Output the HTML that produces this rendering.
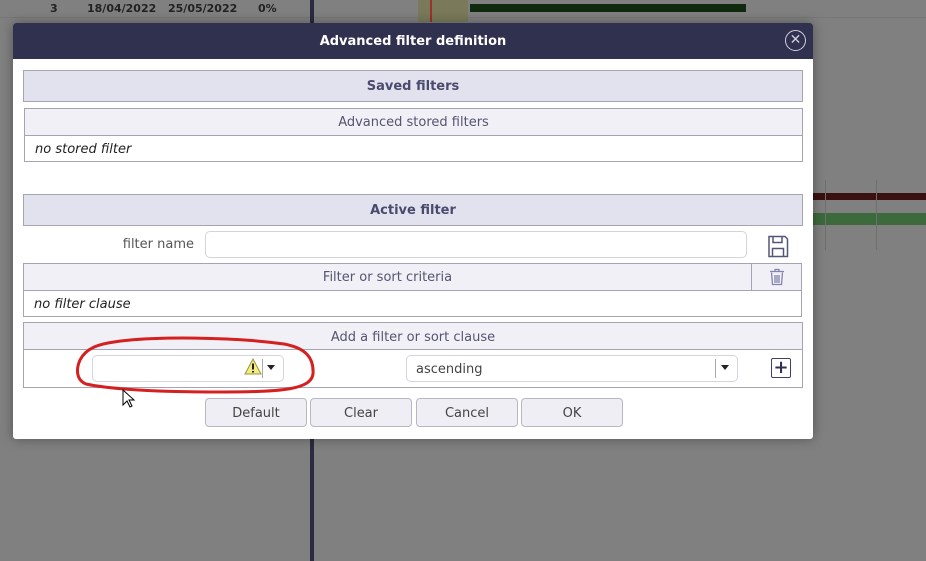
<!DOCTYPE html>
<html><head><style>
body{margin:0;width:926px;height:561px;background:#808080;position:relative;overflow:hidden;font-family:"DejaVu Sans","Liberation Sans",sans-serif;}
.a{position:absolute;box-sizing:border-box}
.hd{background:#e2e2ee;border:1px solid #a4a4b4;color:#4a4a6e;font-weight:bold;font-size:13px;text-align:center}
.sh{background:#f0f0f6;border:1px solid #a4a4b4;color:#555570;font-size:13px;text-align:center}
.rw{background:#fff;border:1px solid #a4a4b4;font-size:13px;font-style:italic;color:#222;padding-left:10px}
.btn{background:#eeeef4;border:1px solid #b8b8c4;border-radius:4px;font-size:13px;color:#444;text-align:center;line-height:29px}
.in{background:#fff;border:1px solid #d4d4dc;border-radius:5px}
</style></head><body>
<div class="a" style="left:0;top:0;width:926px;height:18px;border-bottom:1px solid #777"></div>
<div class="a" style="left:418px;top:0;width:50px;height:22px;background:#7a7a5a"></div>
<div class="a" style="left:430px;top:0;width:2px;height:22px;background:#a03030"></div>
<div class="a" style="left:470px;top:4px;width:276px;height:8px;background:#0f2a0f"></div>
<div class="a" style="left:310px;top:0;width:4px;height:561px;background:#2a2a40"></div>
<div class="a" style="left:50px;top:2px;font-size:11px;font-weight:bold;color:#222">3</div>
<div class="a" style="left:87px;top:2px;font-size:11px;font-weight:bold;color:#222">18/04/2022</div>
<div class="a" style="left:168px;top:2px;font-size:11px;font-weight:bold;color:#222">25/05/2022</div>
<div class="a" style="left:258px;top:2px;font-size:11px;font-weight:bold;color:#222">0%</div>
<div class="a" style="left:813px;top:193px;width:113px;height:7px;background:#3a1010"></div>
<div class="a" style="left:813px;top:213px;width:113px;height:12px;background:#3c6a3c"></div>
<div class="a" style="left:825px;top:180px;width:1px;height:70px;background:#6f6f6f"></div>
<div class="a" style="left:876px;top:180px;width:1px;height:70px;background:#6f6f6f"></div>
<div class="a" style="left:13px;top:23px;width:800px;height:416px;background:#fff;border-radius:3px;box-shadow:0 0 12px rgba(0,0,0,.35)"></div>
<div class="a" style="left:13px;top:23px;width:800px;height:36px;background:#30304f;border-radius:3px 3px 0 0;color:#fff;font-weight:bold;font-size:13px;text-align:center;line-height:38px">Advanced filter definition</div>
<div class="a" style="left:785px;top:30px;width:21px;height:21px;border:1.5px solid #d0d0e0;border-radius:50%;color:#d0d0e0;font-size:14px;text-align:center;line-height:19px">✕</div>
<div class="a hd" style="left:23px;top:70px;width:780px;height:32px;line-height:32px">Saved filters</div>
<div class="a sh" style="left:24px;top:108px;width:779px;height:28px;line-height:28px">Advanced stored filters</div>
<div class="a rw" style="left:24px;top:135px;width:779px;height:27px;line-height:28px">no stored filter</div>
<div class="a hd" style="left:23px;top:194px;width:780px;height:32px;line-height:32px">Active filter</div>
<div class="a" style="left:60px;top:237px;width:134px;text-align:right;font-size:13px;color:#555">filter name</div>
<div class="a in" style="left:205px;top:231px;width:542px;height:27px"></div>
<svg class="a" style="left:767px;top:235px" width="22" height="23" viewBox="0 0 22 23"><path d="M2 1.5h16l2.5 2.5v17.5h-18.5z" fill="none" stroke="#55557a" stroke-width="1.5"/><path d="M6 1.5v6h9v-6M5.5 21.5v-8h11v8" fill="none" stroke="#55557a" stroke-width="1.5"/></svg>
<div class="a sh" style="left:23px;top:263px;width:729px;height:28px;line-height:28px">Filter or sort criteria</div>
<div class="a sh" style="left:751px;top:263px;width:51px;height:28px"></div>
<svg class="a" style="left:769px;top:268px" width="16" height="18" viewBox="0 0 16 18"><path d="M1 3.5h14M6 3V1.5h4V3M2.5 4.5l1 12h9l1-12M6 7v8M8 7v8M10 7v8" fill="none" stroke="#8484b0" stroke-width="1.3"/></svg>
<div class="a rw" style="left:23px;top:290px;width:779px;height:27px;line-height:27px">no filter clause</div>
<div class="a sh" style="left:23px;top:322px;width:780px;height:28px;line-height:29px">Add a filter or sort clause</div>
<div class="a" style="left:23px;top:349px;width:780px;height:39px;border:1px solid #a4a4b4;border-top:none"></div>
<div class="a in" style="left:92px;top:355px;width:192px;height:27px"></div>
<svg class="a" style="left:244px;top:358px" width="18" height="17" viewBox="0 0 18 17"><path d="M9 1L17 16H1z" fill="#f4ec80" stroke="#9a9440"/><path d="M9 5.5v6M9 13v1.5" stroke="#222" stroke-width="2"/></svg>
<div class="a" style="left:262px;top:359px;width:1px;height:19px;background:#aaa"></div>
<div class="a" style="left:267px;top:365px;width:0;height:0;border-left:4px solid transparent;border-right:4px solid transparent;border-top:5px solid #222"></div>
<div class="a in" style="left:406px;top:355px;width:332px;height:27px;font-size:13px;color:#444;padding-left:9px;line-height:27px">ascending</div>
<div class="a" style="left:715px;top:359px;width:1px;height:19px;background:#aaa"></div>
<div class="a" style="left:721px;top:365px;width:0;height:0;border-left:4px solid transparent;border-right:4px solid transparent;border-top:5px solid #222"></div>
<div class="a" style="left:771px;top:358px;width:20px;height:20px;border:1.5px solid #40406a;border-radius:2px;color:#30304f;font-size:18px;font-weight:bold;text-align:center;line-height:17px">+</div>
<svg class="a" style="left:74px;top:334px" width="244" height="62" viewBox="0 0 244 62"><path d="M40 8C80 2 160 3 210 10C232 14 240 24 239 40C237 55 210 58 150 58C90 58 40 56 12 50C2 46 2 35 6 26C12 14 25 10 40 8Z" fill="none" stroke="#d42020" stroke-width="3"/></svg>
<svg class="a" style="left:122px;top:389px" width="14" height="20" viewBox="0 0 14 20"><path d="M1 1v15l4-4 3 6 2-1-3-6h5z" fill="#fff" stroke="#000"/></svg>
<div class="a btn" style="left:205px;top:398px;width:102px;height:29px">Default</div>
<div class="a btn" style="left:310px;top:398px;width:102px;height:29px">Clear</div>
<div class="a btn" style="left:416px;top:398px;width:102px;height:29px">Cancel</div>
<div class="a btn" style="left:521px;top:398px;width:102px;height:29px">OK</div>
</body></html>
